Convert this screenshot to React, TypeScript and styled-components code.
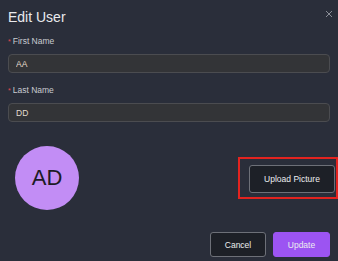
import { createGlobalStyle, styled } from 'styled-components'

const Global = createGlobalStyle`
  html, body {
    margin: 0;
    padding: 0;
    background: #2a2e3a;
  }
  body {
    font-family: 'Liberation Sans', Arial, sans-serif;
  }
`

const Modal = styled.div`
  width: 338px;
  height: 261px;
  box-sizing: border-box;
  padding: 9px 8px 0 8px;
  background: #2a2e3a;
  overflow: hidden;
`

const Header = styled.div`
  display: flex;
  justify-content: space-between;
  align-items: flex-start;
  margin-bottom: 11px;
`

const Title = styled.h2`
  margin: 0;
  font-size: 14px;
  line-height: 16px;
  font-weight: normal;
  color: #e9eaee;
`

const Close = styled.button`
  margin: 1px -3px 0 0;
  padding: 0;
  border: 0;
  background: none;
  width: 8px;
  height: 8px;
  display: flex;
`

const Field = styled.div`
  margin-bottom: 12px;
`

const Label = styled.label`
  display: block;
  font-size: 8.5px;
  line-height: 10px;
  color: #c9cbd1;
  margin-bottom: 7px;

  & span {
    color: #e5484d;
    margin-right: 2px;
    font-size: 7px;
  }
`

const Input = styled.input`
  display: block;
  width: 100%;
  box-sizing: border-box;
  height: 19px;
  padding: 0 7px;
  background: #333437;
  border: 1px solid #4b4c50;
  border-radius: 4px;
  color: #e4ddcf;
  font-family: 'Liberation Sans', Arial, sans-serif;
  font-size: 8.5px;
  outline: none;
`

const PictureRow = styled.div`
  display: flex;
  align-items: center;
  justify-content: space-between;
  margin-top: 24px;
  padding-left: 7px;
`

const Avatar = styled.div`
  width: 64px;
  height: 64px;
  border-radius: 50%;
  background: #c28df5;
  color: #1d1b26;
  font-size: 22px;
  display: flex;
  align-items: center;
  justify-content: center;
`

const Highlight = styled.div`
  border: 2px solid #e3231f;
  padding: 6px 1px 4px 9px;
  margin-right: -8px;
`

const Btn = styled.button<{ $primary?: boolean }>`
  height: 25px;
  width: ${(p) => (p.$primary ? '57px' : '56px')};
  padding: 0;
  border-radius: 3px;
  font-family: 'Liberation Sans', Arial, sans-serif;
  font-size: 8.5px;
  color: #ecedf0;
  cursor: pointer;
  border: 1px solid ${(p) => (p.$primary ? '#9c54f2' : '#6d7078')};
  background: ${(p) => (p.$primary ? '#9c54f2' : '#1d2027')};
`

const UploadBtn = styled(Btn)`
  width: 86px;
  height: 28px;
  display: block;
`

const Footer = styled.div`
  display: flex;
  justify-content: flex-end;
  gap: 7px;
  margin-top: 22px;
`

export default function App() {
  return (
    <>
      <Global />
      <Modal>
        <Header>
          <Title>Edit User</Title>
          <Close aria-label='close'>
            <svg width='8' height='8' viewBox='0 0 8 8'>
              <path d='M1 1L7 7M7 1L1 7' stroke='#8a8d96' strokeWidth='1' />
            </svg>
          </Close>
        </Header>
        <Field>
          <Label>
            <span>*</span>First Name
          </Label>
          <Input defaultValue='AA' />
        </Field>
        <Field>
          <Label>
            <span>*</span>Last Name
          </Label>
          <Input defaultValue='DD' />
        </Field>
        <PictureRow>
          <Avatar>AD</Avatar>
          <Highlight>
            <UploadBtn>Upload Picture</UploadBtn>
          </Highlight>
        </PictureRow>
        <Footer>
          <Btn>Cancel</Btn>
          <Btn $primary>Update</Btn>
        </Footer>
      </Modal>
    </>
  )
}
